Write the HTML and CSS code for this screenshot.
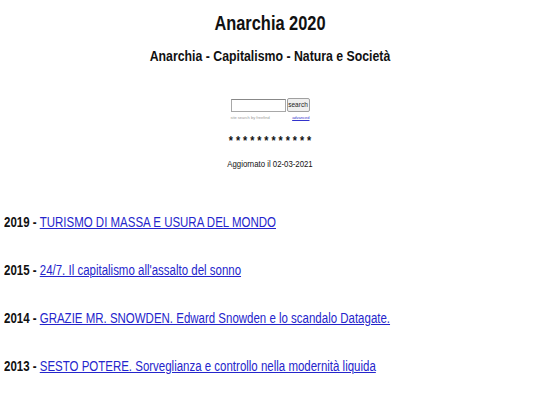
FILE: index.html
```html
<!DOCTYPE html>
<html lang="it">
<head>
<meta charset="utf-8">
<title>Anarchia 2020</title>
<link rel="stylesheet" href="styles.css">
</head>
<body>
<header class="head">
  <h1 class="title narrow">Anarchia 2020</h1>
  <h2 class="subtitle narrow">Anarchia - Capitalismo - Natura e Società</h2>
  <form class="search">
    <div class="search-row">
      <input class="search-input" type="text">
      <button class="search-btn" type="button">search</button>
    </div>
    <div class="search-meta">
      <span class="by">site search by freefind</span>
      <a class="adv" href="#">advanced</a>
    </div>
  </form>
  <p class="stars narrow">* * * * * * * * * * * *</p>
  <p class="updated narrow">Aggiornato il 02-03-2021</p>
</header>
<ul class="list">
  <li class="item"><b>2019 - </b><a href="#">TURISMO DI MASSA E USURA DEL MONDO</a></li>
  <li class="item"><b>2015 - </b><a href="#">24/7. Il capitalismo all'assalto del sonno</a></li>
  <li class="item"><b>2014 - </b><a href="#">GRAZIE MR. SNOWDEN. Edward Snowden e lo scandalo Datagate.</a></li>
  <li class="item"><b>2013 - </b><a href="#">SESTO POTERE. Sorveglianza e controllo nella modernità liquida</a></li>
</ul>
</body>
</html>
```
FILE: styles.css
```css
body {
  margin: 0;
  padding: 0 4px;
  font-family: "Liberation Sans", Arial, sans-serif;
  color: #111;
  background: #fff;
}
.head {
  text-align: center;
  display: flex;
  flex-direction: column;
}
.narrow {
  transform: scaleX(0.82);
  transform-origin: 50% 50%;
}
.title {
  font-size: 20px;
  line-height: 24px;
  margin: 11px 0 0;
}
.subtitle {
  font-size: 15px;
  line-height: 20px;
  margin: 11px 0 0;
}
.search {
  display: flex;
  flex-direction: column;
  width: 79px;
  margin: 32px auto 0;
}
.search-row {
  display: flex;
  align-items: center;
  gap: 1px;
}
.search-input {
  box-sizing: border-box;
  width: 55px;
  height: 13px;
  border: 1px solid #a8a8a8;
  border-top-color: #888;
  padding: 0;
  margin: 0;
  background: #fff;
}
.search-btn {
  box-sizing: border-box;
  width: 23px;
  height: 14px;
  font-family: "Liberation Sans", sans-serif;
  font-size: 6.5px;
  line-height: 12px;
  padding: 0;
  margin: 0;
  border: 1px solid #a0a0a0;
  border-radius: 2px;
  background: #efefef;
  color: #222;
}
.search-meta {
  display: flex;
  justify-content: space-between;
  font-size: 4px;
  line-height: 5px;
  margin-top: 3px;
}
.by { color: #999; }
.adv { color: #33c; }
.stars {
  font-size: 13px;
  line-height: 16px;
  font-weight: bold;
  margin: 13px 0 0;
}
.updated {
  font-size: 9.5px;
  line-height: 12px;
  margin: 9px 0 0;
}
.list {
  list-style: none;
  margin: 44px 0 0;
  padding: 0;
}
.item {
  font-size: 14px;
  line-height: 16px;
  margin-bottom: 32px;
  transform: scaleX(0.82);
  transform-origin: 0 50%;
  white-space: nowrap;
}
.item b {
  color: #111;
}
.item a {
  color: #2525cc;
}
```
